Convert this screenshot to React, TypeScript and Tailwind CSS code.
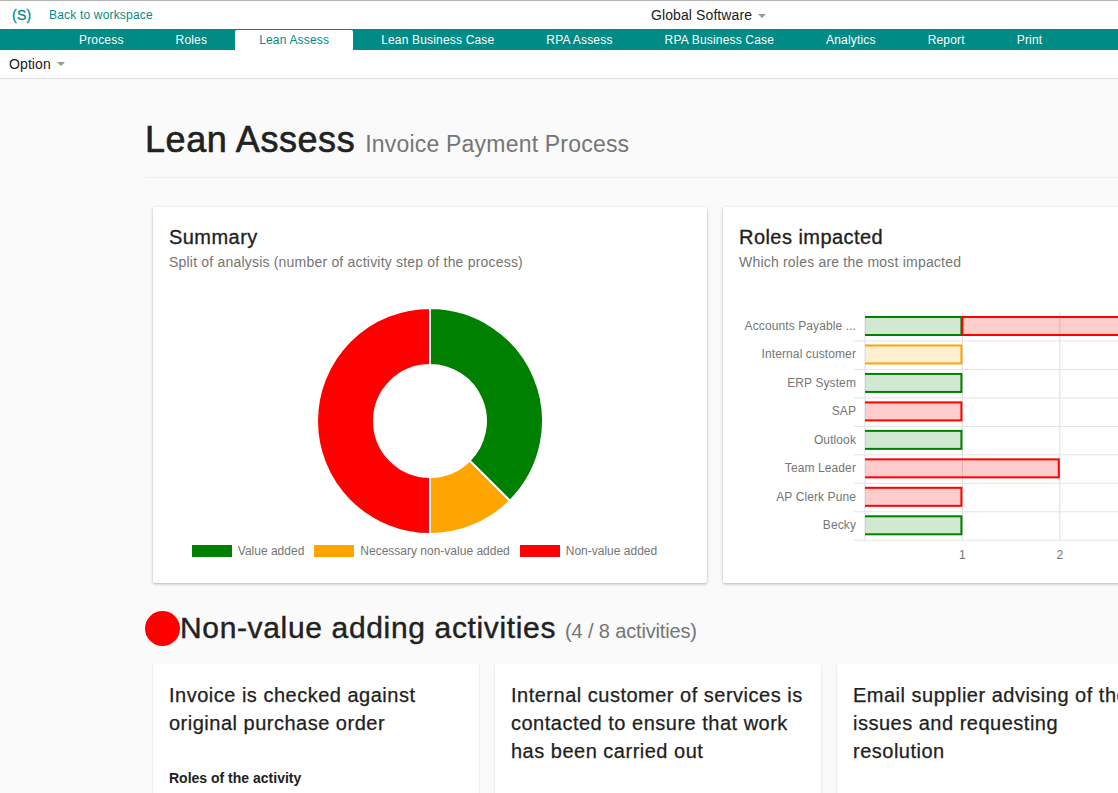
import React from 'react';

const tabs = [
  { name: 'Process', active: false },
  { name: 'Roles', active: false },
  { name: 'Lean Assess', active: true },
  { name: 'Lean Business Case', active: false },
  { name: 'RPA Assess', active: false },
  { name: 'RPA Business Case', active: false },
  { name: 'Analytics', active: false },
  { name: 'Report', active: false },
  { name: 'Print', active: false },
];

const GREEN = { stroke: '#008000', fill: 'rgba(0,128,0,0.18)' };
const ORANGE = { stroke: '#ffa500', fill: 'rgba(255,165,0,0.18)' };
const RED = { stroke: '#ff0000', fill: 'rgba(255,0,0,0.2)' };

const roles = [
  { name: 'Accounts Payable ...', bars: [{ c: GREEN, from: 0, to: 1 }, { c: RED, from: 1, to: 4 }] },
  { name: 'Internal customer', bars: [{ c: ORANGE, from: 0, to: 1 }] },
  { name: 'ERP System', bars: [{ c: GREEN, from: 0, to: 1 }] },
  { name: 'SAP', bars: [{ c: RED, from: 0, to: 1 }] },
  { name: 'Outlook', bars: [{ c: GREEN, from: 0, to: 1 }] },
  { name: 'Team Leader', bars: [{ c: RED, from: 0, to: 2 }] },
  { name: 'AP Clerk Pune', bars: [{ c: RED, from: 0, to: 1 }] },
  { name: 'Becky', bars: [{ c: GREEN, from: 0, to: 1 }] },
];

const activities = [
  { lines: 'Invoice is checked against original purchase order' },
  { lines: 'Internal customer of services is contacted to ensure that work has been carried out' },
  { lines: 'Email supplier advising of the issues and requesting resolution' },
];

const Caret = () => (
  <span className="ml-[6px] inline-block h-0 w-0 border-x-[4px] border-t-[4px] border-x-transparent border-t-[#999] align-middle" />
);

const arc = (start: number, end: number) => {
  const p = (a: number, r: number) => {
    const t = ((a - 90) * Math.PI) / 180;
    return `${112 + r * Math.cos(t)} ${112 + r * Math.sin(t)}`;
  };
  const large = end - start > 180 ? 1 : 0;
  return `M${p(start, 113)} A113 113 0 ${large} 1 ${p(end, 113)} L${p(end, 56)} A56 56 0 ${large} 0 ${p(start, 56)} Z`;
};

const Donut = () => (
  <svg width="224" height="224" viewBox="0 0 224 224" className="overflow-visible">
    <path d={arc(0, 135)} fill="#008000" stroke="#fff" strokeWidth="2" />
    <path d={arc(135, 180)} fill="#ffa500" stroke="#fff" strokeWidth="2" />
    <path d={arc(180, 360)} fill="#ff0000" stroke="#fff" strokeWidth="2" />
  </svg>
);

const RolesChart = () => {
  const x0 = 126;
  const unit = 97.4;
  const rowH = 28.47;
  return (
    <svg width="538" height="262" viewBox="0 0 538 262" fontFamily="'Liberation Sans', Arial, sans-serif" fontSize="12" fill="#757575" letterSpacing="0.1">
      <defs>
        <clipPath id="plot">
          <rect x={x0} y="0" width="500" height="240" />
        </clipPath>
      </defs>
      {[0, 1, 2, 3, 4].map((i) => (
        <line key={i} x1={x0 + i * unit} x2={x0 + i * unit} y1="0" y2="228" stroke="#ddd" />
      ))}
      {roles.map((r, i) => (
        <g key={r.name}>
          <line x1="115" x2="538" y1={rowH * (i + 1) + 0.5} y2={rowH * (i + 1) + 0.5} stroke="#e4e4e4" />
          <text x="117" y={rowH * i + 18} textAnchor="end">{r.name}</text>
          {r.bars.map((b) => (
            <rect
              key={b.from}
              clipPath="url(#plot)"
              x={x0 + b.from * unit - (b.from === 0 ? 3 : 0)}
              y={rowH * i + 5}
              width={(b.to - b.from) * unit + (b.from === 0 ? 3 : 0) - 1}
              height="18"
              fill={b.c.fill}
              stroke={b.c.stroke}
              strokeWidth="2"
            />
          ))}
        </g>
      ))}
      <text x={x0 + unit} y="247" textAnchor="middle">1</text>
      <text x={x0 + 2 * unit} y="247" textAnchor="middle">2</text>
      <text x={x0 + 3 * unit} y="247" textAnchor="middle">3</text>
    </svg>
  );
};

const LegendItem = ({ color, label }: { color: string; label: string }) => (
  <div className="flex items-center gap-[6px]">
    <span className="h-[12px] w-[40px]" style={{ backgroundColor: color }} />
    <span className="text-[12px] leading-[14px] text-[#757575]">{label}</span>
  </div>
);

export default function App() {
  return (
    <div className="flex h-[793px] w-[1118px] flex-col overflow-hidden bg-[#fafafa] font-['Liberation_Sans',Arial,sans-serif] text-[#212121]">
      {/* Top bar */}
      <div className="relative flex h-[29px] shrink-0 items-center border-t border-[#b5b5b5] bg-white pl-[12px]">
        <span className="w-[37px] text-[14px] tracking-[0.3px] text-[#008b87] [-webkit-text-stroke:0.3px_#008b87]">(S)</span>
        <span className="text-[12px] tracking-[0.18px] text-[#008b87]">Back to workspace</span>
        <div className="absolute left-[651px] top-[6px] text-[14px] leading-[16px] tracking-[0.1px] text-[#212121]">
          Global Software<Caret />
        </div>
      </div>

      {/* Tabs */}
      <div className="flex h-[21px] shrink-0 items-end bg-[#008b87] pl-[53px] tracking-[0.175px]">
        {tabs.map((tab) =>
          tab.active ? (
            <div key={tab.name} className="mx-[2px] flex h-[20px] items-center rounded-t-[2px] bg-white px-[24px] text-[12px] text-[#008b87]">
              {tab.name}
            </div>
          ) : (
            <div key={tab.name} className="flex h-[21px] items-center px-[26px] text-[12px] text-white">
              {tab.name}
            </div>
          ),
        )}
      </div>

      {/* Option bar */}
      <div className="flex h-[29px] shrink-0 items-center border-b border-[#ddd] bg-white pl-[9px] text-[14px] tracking-[0.1px] text-[#212121]">
        Option<Caret />
      </div>

      <div className="w-[1400px] pl-[145px]">
        <div className="flex h-[99px] w-[973px] items-end border-b border-[#eee] pb-[15px]">
          <h1 className="text-[36px] font-medium leading-[44px] tracking-[0.55px] text-[#212121] [-webkit-text-stroke:0.6px_#212121]">Lean Assess</h1>
          <span className="ml-[10px] pb-[2px] text-[23px] leading-[32px] tracking-[0.2px] text-[#757575]">Invoice Payment Process</span>
        </div>

        {/* Charts */}
        <div className="mt-[29px] flex gap-[16px] pl-[8px]">
          <section className="h-[376px] w-[554px] rounded-[2px] bg-white p-[16px] shadow-[0_1px_3px_rgba(0,0,0,0.3)]">
            <h2 className="text-[20px] leading-[28px] tracking-[0.45px] [-webkit-text-stroke:0.3px_#212121]">Summary</h2>
            <p className="mt-[1px] text-[14px] leading-[20px] tracking-[0.2px] text-[#757575]">Split of analysis (number of activity step of the process)</p>
            <div className="mt-[37px] flex justify-center">
              <Donut />
            </div>
            <div className="mt-[11px] flex justify-center gap-[10px] pr-[11px]">
              <LegendItem color="#008000" label="Value added" />
              <LegendItem color="#ffa500" label="Necessary non-value added" />
              <LegendItem color="#ff0000" label="Non-value added" />
            </div>
          </section>

          <section className="h-[376px] w-[554px] rounded-[2px] bg-white p-[16px] pr-0 shadow-[0_1px_3px_rgba(0,0,0,0.3)]">
            <h2 className="text-[20px] leading-[28px] tracking-[0.45px] [-webkit-text-stroke:0.3px_#212121]">Roles impacted</h2>
            <p className="mt-[1px] text-[14px] leading-[20px] tracking-[0.2px] text-[#757575]">Which roles are the most impacted</p>
            <div className="mt-[40px]">
              <RolesChart />
            </div>
          </section>
        </div>

        {/* Non-value adding */}
        <div className="mt-[27px] flex h-[36px] items-center">
          <span className="h-[35px] w-[35px] shrink-0 rounded-full bg-[#ff0000]" />
          <h2 className="text-[30px] leading-[36px] tracking-[0.65px] [-webkit-text-stroke:0.4px_#212121]">Non-value adding activities</h2>
          <span className="ml-[9px] mt-[5px] text-[20px] leading-[24px] tracking-[-0.15px] text-[#757575]">(4 / 8 activities)</span>
        </div>

        <div className="mt-[18px] flex gap-[16px] pl-[8px]">
          {activities.map((a, i) => (
            <article key={i} className="h-[200px] w-[326px] shrink-0 rounded-[2px] bg-white p-[16px] pt-[17px] shadow-[0_1px_2px_rgba(0,0,0,0.2)]">
              <h3 className="min-h-[84px] text-[20px] leading-[28px] tracking-[0.5px] [-webkit-text-stroke:0.25px_#212121]">{a.lines}</h3>
              {i === 0 && <h4 className="mt-[3px] text-[14px] font-bold leading-[20px]">Roles of the activity</h4>}
            </article>
          ))}
        </div>
      </div>
    </div>
  );
}
